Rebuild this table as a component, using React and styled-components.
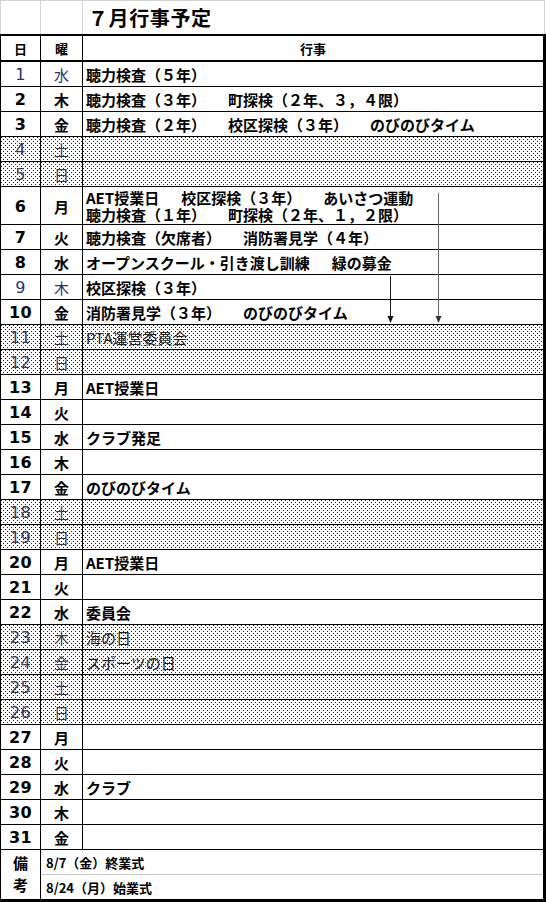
import React from "react";
import styled, { createGlobalStyle, css } from "styled-components";

const Global = createGlobalStyle`
  html, body { margin: 0; padding: 0; background: #fff; }
  body { font-family: "Noto Sans CJK JP", "Noto Sans", sans-serif; color: #000; }
`;

const dots = css`
  background-color: #fff;
  background-image: conic-gradient(at 1px 1px, transparent 75%, #222 0),
    conic-gradient(at 1px 1px, transparent 75%, #222 0);
  background-size: 4px 4px;
  background-position: 0 0, 2px 2px;
`;

const Page = styled.div`
  position: relative;
  width: 546px;
  height: 902px;
  overflow: hidden;
`;

const TitleRow = styled.div`
  display: grid;
  grid-template-columns: 40px 42px 1fr;
  height: 34px;
  box-sizing: border-box;
  border-top: 1px solid #d4d4d4;
  border-left: 1px solid #d4d4d4;
  width: 545px;
`;

const TitleCell = styled.div`
  border-right: 1px solid #d4d4d4;
  display: flex;
  align-items: center;
  padding-left: ${(p) => (p.$title ? "5px" : "0")};
  font-size: 20px;
  font-weight: 700;
  letter-spacing: 0.6px;
`;

const Table = styled.div`
  box-sizing: border-box;
  width: 546px;
  border-left: 1px solid #000;
  border-right: 3px solid #000;
  border-top: 2px solid #000;
  border-bottom: 3px solid #000;
  display: flex;
  flex-direction: column;
`;

const Row = styled.div`
  display: grid;
  grid-template-columns: 40px 42px 1fr;
  box-sizing: border-box;
  height: ${(p) => p.$h}px;
  border-bottom: ${(p) => p.$bw || 1}px solid #000;
  ${(p) => p.$off && dots}
`;

const Cell = styled.div`
  box-sizing: border-box;
  border-right: ${(p) => (p.$last ? "none" : "1px solid #000")};
  display: flex;
  align-items: center;
  justify-content: ${(p) => (p.$left ? "flex-start" : "center")};
  padding-left: ${(p) => (p.$left ? "3px" : "0")};
  padding-top: 1px;
  min-width: 0;
  white-space: nowrap;
  overflow: hidden;
`;

const HeadText = styled.span`
  font-size: 13px;
  font-weight: 700;
`;

const DayNum = styled.span`
  font-family: "DejaVu Sans", "Liberation Sans", sans-serif;
  font-size: 16px;
  font-weight: ${(p) => (p.$thin ? 400 : 700)};
  color: ${(p) => p.$color};
  letter-spacing: 0.4px;
`;

const WeekDay = styled.span`
  font-size: 15px;
  font-weight: ${(p) => (p.$thin ? 400 : 700)};
  color: ${(p) => p.$color};
`;

const Events = styled.div`
  display: flex;
  flex-direction: column;
  line-height: 17px;
`;

const EventLine = styled.div`
  display: flex;
  gap: 22px;
  font-size: 15px;
  font-weight: ${(p) => (p.$thin ? 400 : 700)};
  color: ${(p) => (p.$thin ? "#222" : "#000")};
`;

const Notes = styled.div`
  display: grid;
  grid-template-columns: 40px 1fr;
  height: 49px;
`;

const NoteLabel = styled.div`
  box-sizing: border-box;
  border-right: 1px solid #000;
  display: flex;
  flex-direction: column;
  align-items: center;
  justify-content: space-around;
  font-size: 15px;
  font-weight: 700;
  line-height: 18px;
  padding: 2px 0 3px;
`;

const NoteList = styled.div`
  display: flex;
  flex-direction: column;
`;

const NoteItem = styled.div`
  box-sizing: border-box;
  height: ${(p) => p.$h}px;
  border-bottom: ${(p) => (p.$line ? "1px solid #c8c8c8" : "none")};
  display: flex;
  align-items: center;
  padding-left: 5px;
  font-size: 13px;
  font-weight: 700;
  white-space: nowrap;
`;

const Overlay = styled.svg`
  position: absolute;
  left: 0;
  top: 0;
  pointer-events: none;
`;

const rows = [
  { d: 1, w: "水", ev: [["聴力検査（５年）"]], tone: "blue" },
  { d: 2, w: "木", ev: [["聴力検査（３年）", "町探検（２年、３，４限）"]] },
  { d: 3, w: "金", ev: [["聴力検査（２年）", "校区探検（３年）", "のびのびタイム"]] },
  { d: 4, w: "土", off: true },
  { d: 5, w: "日", off: true },
  {
    d: 6,
    w: "月",
    h: 38,
    ev: [
      ["AET授業日", "校区探検（３年）", "あいさつ運動"],
      ["聴力検査（１年）", "町探検（２年、１，２限）"],
    ],
  },
  { d: 7, w: "火", ev: [["聴力検査（欠席者）", "消防署見学（４年）"]] },
  { d: 8, w: "水", ev: [["オープンスクール・引き渡し訓練", "緑の募金"]] },
  { d: 9, w: "木", ev: [["校区探検（３年）"]], tone: "blue" },
  { d: 10, w: "金", ev: [["消防署見学（３年）", "のびのびタイム"]] },
  { d: 11, w: "土", off: true, ev: [["PTA運営委員会"]] },
  { d: 12, w: "日", off: true },
  { d: 13, w: "月", ev: [["AET授業日"]] },
  { d: 14, w: "火" },
  { d: 15, w: "水", ev: [["クラブ発足"]] },
  { d: 16, w: "木" },
  { d: 17, w: "金", ev: [["のびのびタイム"]] },
  { d: 18, w: "土", off: true },
  { d: 19, w: "日", off: true },
  { d: 20, w: "月", ev: [["AET授業日"]] },
  { d: 21, w: "火" },
  { d: 22, w: "水", ev: [["委員会"]] },
  { d: 23, w: "木", off: true, ev: [["海の日"]] },
  { d: 24, w: "金", off: true, ev: [["スポーツの日"]] },
  { d: 25, w: "土", off: true },
  { d: 26, w: "日", off: true },
  { d: 27, w: "月" },
  { d: 28, w: "火" },
  { d: 29, w: "水", ev: [["クラブ"]] },
  { d: 30, w: "木" },
  { d: 31, w: "金" },
];

function DayRow({ r }) {
  const thin = r.off || r.tone === "blue";
  const color = r.tone === "blue" ? "#22357a" : r.off ? "#3a3a5a" : "#000";
  return (
    <Row $h={r.h || 25} $off={r.off}>
      <Cell>
        <DayNum $thin={thin} $color={color}>{r.d}</DayNum>
      </Cell>
      <Cell>
        <WeekDay $thin={thin} $color={color}>{r.w}</WeekDay>
      </Cell>
      <Cell $left $last>
        {r.ev && (
          <Events>
            {r.ev.map((line, i) => (
              <EventLine key={i} $thin={r.off}>
                {line.map((s, j) => (
                  <span key={j}>{s}</span>
                ))}
              </EventLine>
            ))}
          </Events>
        )}
      </Cell>
    </Row>
  );
}

export default function App() {
  return (
    <Page>
      <Global />
      <TitleRow>
        <TitleCell />
        <TitleCell />
        <TitleCell $title>７月行事予定</TitleCell>
      </TitleRow>
      <Table>
        <Row $h={26} $bw={2}>
          <Cell>
            <HeadText>日</HeadText>
          </Cell>
          <Cell>
            <HeadText>曜</HeadText>
          </Cell>
          <Cell $last>
            <HeadText>行事</HeadText>
          </Cell>
        </Row>
        {rows.map((r) => (
          <DayRow key={r.d} r={r} />
        ))}
        <Notes>
          <NoteLabel>
            <span>備</span>
            <span>考</span>
          </NoteLabel>
          <NoteList>
            <NoteItem $h={25} $line>8/7（金）終業式</NoteItem>
            <NoteItem $h={24}>8/24（月）始業式</NoteItem>
          </NoteList>
        </Notes>
      </Table>
      <Overlay width="546" height="902" viewBox="0 0 546 902">
        <line x1="390.5" y1="276" x2="390.5" y2="318" stroke="#111" strokeWidth="1" />
        <polygon points="387.5,316 393.5,316 390.5,323" fill="#111" />
        <line x1="438.5" y1="193" x2="438.5" y2="318" stroke="#666" strokeWidth="1" />
        <polygon points="435.5,316 441.5,316 438.5,323" fill="#333" />
      </Overlay>
    </Page>
  );
}
